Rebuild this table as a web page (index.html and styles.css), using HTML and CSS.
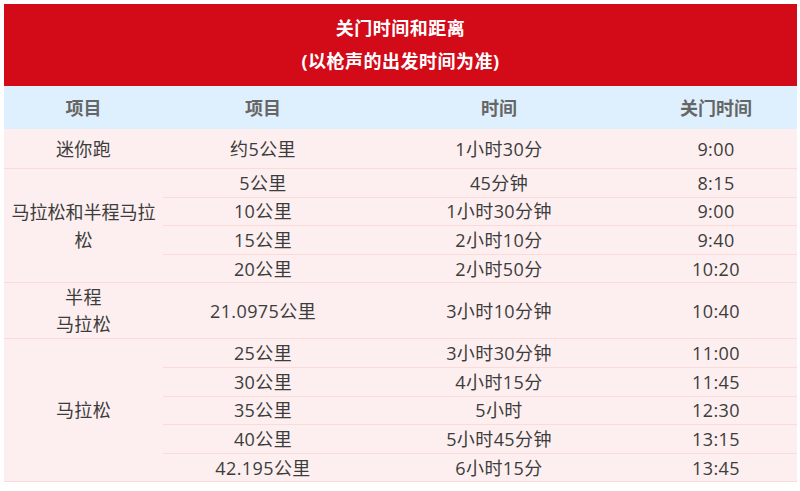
FILE: index.html
```html
<!DOCTYPE html>
<html lang="zh-CN">
<head>
<meta charset="utf-8">
<title>关门时间和距离</title>
<link rel="stylesheet" href="styles.css">
</head>
<body>
<div class="wrap">
<table class="cutoff">
  <colgroup>
    <col class="c1"><col class="c2"><col class="c3"><col class="c4">
  </colgroup>
  <thead>
    <tr class="title-row"><th colspan="4">关门时间和距离<br>(以枪声的出发时间为准)</th></tr>
    <tr class="head-row"><th>项目</th><th>项目</th><th>时间</th><th>关门时间</th></tr>
  </thead>
  <tbody>
    <tr class="row-mini"><td>迷你跑</td><td>约5公里</td><td>1小时30分</td><td>9:00</td></tr>
    <tr class="row"><td rowspan="4" class="wrapcell">马拉松和半程马拉松</td><td>5公里</td><td>45分钟</td><td>8:15</td></tr>
    <tr class="row"><td>10公里</td><td>1小时30分钟</td><td>9:00</td></tr>
    <tr class="row"><td>15公里</td><td>2小时10分</td><td>9:40</td></tr>
    <tr class="row"><td>20公里</td><td>2小时50分</td><td>10:20</td></tr>
    <tr class="row-half"><td class="two">半程<br>马拉松</td><td>21.0975公里</td><td>3小时10分钟</td><td>10:40</td></tr>
    <tr class="row"><td rowspan="5">马拉松</td><td>25公里</td><td>3小时30分钟</td><td>11:00</td></tr>
    <tr class="row"><td>30公里</td><td>4小时15分</td><td>11:45</td></tr>
    <tr class="row"><td>35公里</td><td>5小时</td><td>12:30</td></tr>
    <tr class="row"><td>40公里</td><td>5小时45分钟</td><td>13:15</td></tr>
    <tr class="row"><td>42.195公里</td><td>6小时15分</td><td>13:45</td></tr>
  </tbody>
</table>
</div>
</body>
</html>
```
FILE: styles.css
```css
html, body {
  margin: 0;
  padding: 0;
  background: #ffffff;
}
.wrap {
  padding: 4px;
}
.cutoff {
  width: 793px;
  border-collapse: collapse;
  table-layout: fixed;
  font-family: "Open Sans", "Noto Sans CJK SC", sans-serif;
  font-size: 18px;
  color: #3c3c3c;
}
.c1 { width: 159px; }
.c2 { width: 200px; }
.c3 { width: 272px; }
.c4 { width: 162px; }
.cutoff th, .cutoff td {
  padding: 0 4px;
  text-align: center;
  vertical-align: middle;
}
.title-row th {
  background: #d30a18;
  color: #ffffff;
  font-weight: 700;
  font-size: 18px;
  line-height: 33px;
  height: 82px;
  padding: 0;
  letter-spacing: 0.5px;
}
.head-row th {
  background: #def0fd;
  color: #666666;
  font-weight: 700;
  height: 43px;
  line-height: 24px;
}
.cutoff tbody td {
  background: #fdefef;
  border-bottom: 1px solid #fbdada;
  letter-spacing: 0.4px;
}
.row-mini td {
  height: 39px;
  line-height: 24px;
}
.row td {
  height: 27.6px;
  line-height: 24px;
}
.row-half td {
  height: 55px;
  line-height: 24px;
}
.row-half td.two {
  line-height: 27px;
}
.cutoff tbody td.wrapcell {
  line-height: 28px;
  padding: 0 2px;
  letter-spacing: 0;
}
```
